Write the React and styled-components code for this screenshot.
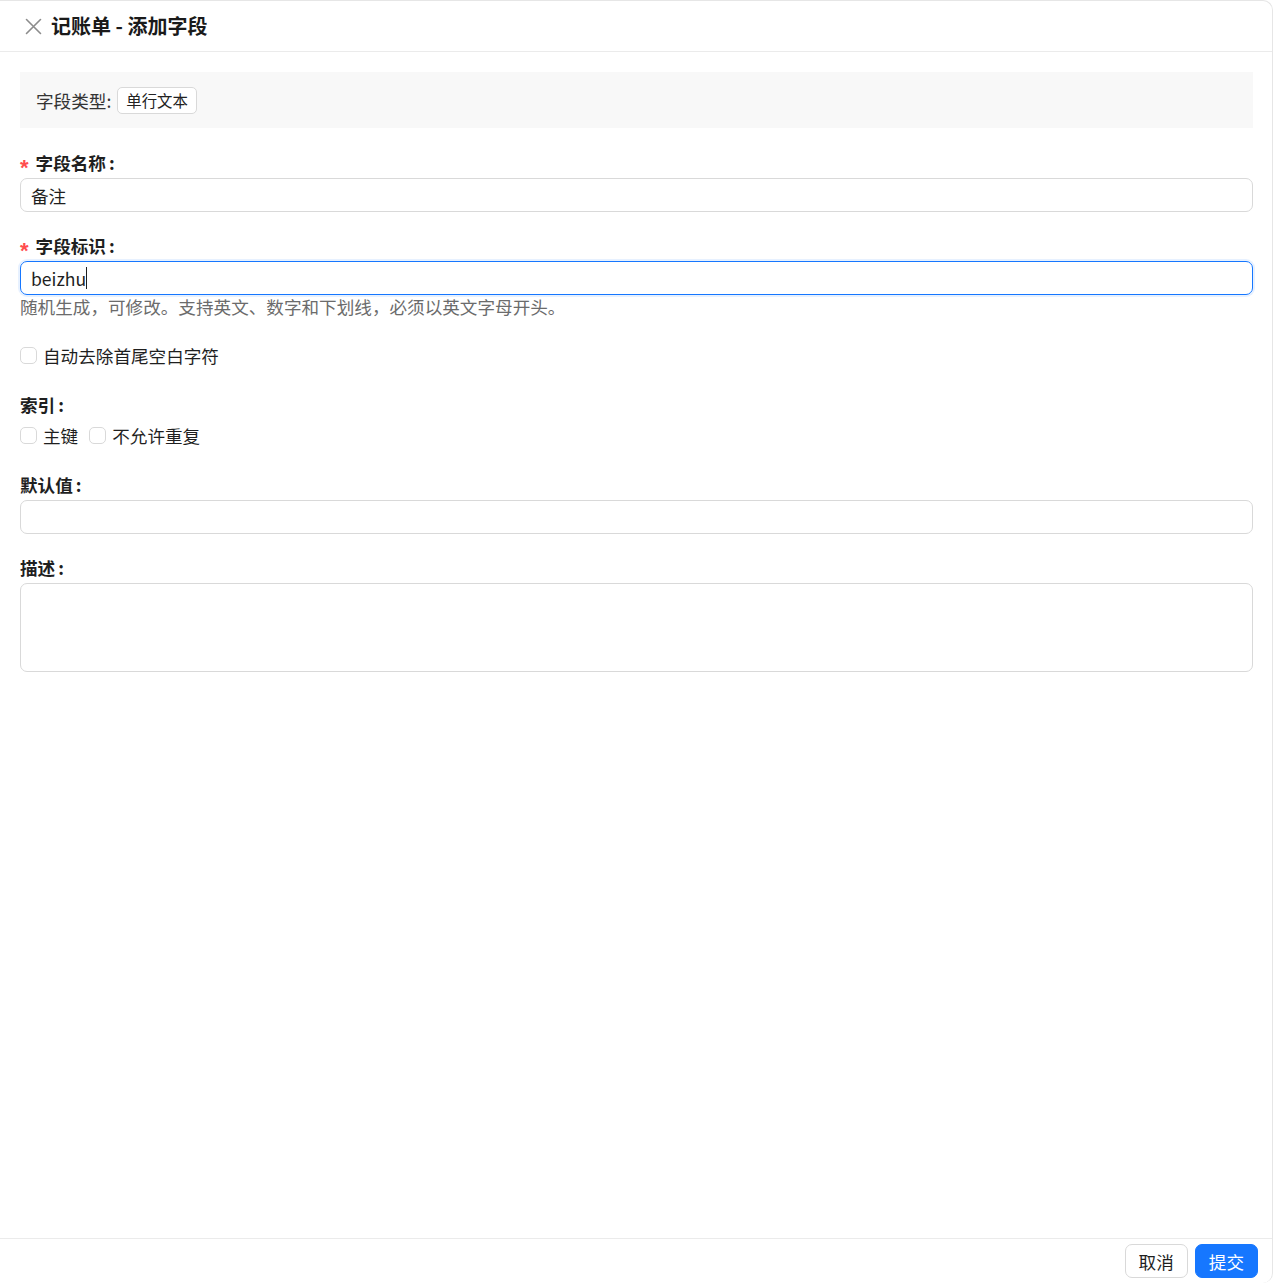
import styled, { createGlobalStyle } from 'styled-components'

const GlobalStyle = createGlobalStyle`
  html, body {
    margin: 0;
    padding: 0;
    background: #fff;
  }
  body {
    font-family: "Noto Sans CJK SC", "Noto Sans", sans-serif;
    font-size: 17.6px;
    color: #1f1f1f;
  }
  * { box-sizing: border-box; }
`

const Panel = styled.div`
  width: 1273px;
  height: 1283px;
  display: flex;
  flex-direction: column;
  border-top: 1px solid #e6e6e6;
  border-right: 1px solid #e6e6e6;
  border-top-right-radius: 10px;
  border-bottom-right-radius: 10px;
  background: #fff;
`

const Header = styled.div`
  height: 51px;
  display: flex;
  align-items: center;
  padding: 0 24px;
  gap: 9px;
  border-bottom: 1px solid #ebebeb;
`

const Close = styled.button`
  width: 18px;
  height: 18px;
  padding: 0;
  border: none;
  background: none;
  display: flex;
  align-items: center;
  justify-content: center;
  color: #8c8c8c;
  cursor: pointer;
`

const Title = styled.div`
  font-size: 20px;
  font-weight: 700;
  color: #1a1a1a;
  line-height: 1;
  margin-top: -1px;
`

const Body = styled.div`
  flex: 1;
  padding: 20px 19px 0 20px;
  overflow: auto;
`

const TypeBar = styled.div`
  height: 56px;
  background: #f8f8f8;
  display: flex;
  align-items: center;
  padding: 0 16px;
  gap: 6px;
  color: #333;
  margin-bottom: 23px;
`

const Tag = styled.span`
  display: inline-flex;
  align-items: center;
  height: 27px;
  padding: 0 8px;
  border: 1px solid #d9d9d9;
  border-radius: 5px;
  background: #fff;
  font-size: 15.4px;
  color: #222;
`

const Field = styled.div`
  margin-bottom: ${p => p.gap ?? 22}px;
`

const Label = styled.div`
  height: 24px;
  line-height: 24px;
  font-weight: 700;
  color: #1f1f1f;
  margin-bottom: 3px;
  display: flex;
  align-items: center;
`

const Colon = styled.span`
  margin-left: 3px;
`

const Star = styled.span`
  color: #ff4d4f;
  font-weight: 700;
  font-size: 22px;
  line-height: 1;
  margin-right: 7px;
  padding-top: 9px;
  font-family: "Liberation Sans", sans-serif;
`

const Input = styled.input`
  display: block;
  width: 100%;
  height: 34px;
  padding: 0 10px;
  border: 1px solid #d9d9d9;
  border-radius: 7px;
  font-family: inherit;
  font-size: 17.6px;
  color: #1f1f1f;
  outline: none;
  background: #fff;
`

const FocusBox = styled.div`
  height: 34px;
  padding: 0 10px;
  border: 1px solid #1677ff;
  border-radius: 7px;
  box-shadow: 0 0 0 2px rgba(22, 119, 255, 0.1);
  display: flex;
  align-items: center;
  color: #1f1f1f;
`

const Caret = styled.span`
  display: inline-block;
  width: 1px;
  height: 22px;
  background: #1f1f1f;
`

const TextArea = styled.textarea`
  display: block;
  width: 100%;
  height: 89px;
  padding: 6px 10px;
  border: 1px solid #d9d9d9;
  border-radius: 7px;
  font-family: inherit;
  font-size: 17.6px;
  resize: none;
  outline: none;
`

const Hint = styled.div`
  line-height: 24px;
  color: #6b6b6b;
`

const CheckRow = styled.div`
  display: flex;
  align-items: center;
  gap: 11px;
  height: ${p => p.h || 24}px;
`

const Check = styled.label`
  display: inline-flex;
  align-items: center;
  gap: 6px;
  color: #1f1f1f;
`

const Box = styled.span`
  width: 17px;
  height: 17px;
  border: 1px solid #d9d9d9;
  border-radius: 5px;
  background: #fff;
`

const Footer = styled.div`
  height: 45px;
  border-top: 1px solid #ebebeb;
  display: flex;
  justify-content: flex-end;
  align-items: flex-start;
  gap: 7px;
  padding: 5px 14px 0 0;
`

const Button = styled.button`
  height: 34px;
  padding: 0 13px;
  border-radius: 7px;
  font-family: inherit;
  font-size: 17.6px;
  cursor: pointer;
  border: 1px solid ${p => p.primary ? '#1677ff' : '#d9d9d9'};
  background: ${p => p.primary ? '#1677ff' : '#fff'};
  color: ${p => p.primary ? '#fff' : '#1f1f1f'};
`

const CloseIcon = () => (
  <svg width="17" height="17" viewBox="0 0 17 17" fill="none" stroke="currentColor" strokeWidth="1.6" strokeLinecap="round">
    <path d="M1.5 1.5 L15.5 15.5 M15.5 1.5 L1.5 15.5" />
  </svg>
)

export default function App() {
  return (
    <>
      <GlobalStyle />
      <Panel>
        <Header>
          <Close><CloseIcon /></Close>
          <Title>记账单 - 添加字段</Title>
        </Header>
        <Body>
          <TypeBar>
            字段类型:
            <Tag>单行文本</Tag>
          </TypeBar>

          <Field>
            <Label><Star>*</Star>字段名称<Colon>:</Colon></Label>
            <Input defaultValue="备注" />
          </Field>

          <Field gap={24}>
            <Label><Star>*</Star>字段标识<Colon>:</Colon></Label>
            <FocusBox>beizhu<Caret /></FocusBox>
            <Hint>随机生成，可修改。支持英文、数字和下划线，必须以英文字母开头。</Hint>
          </Field>

          <Field gap={26}>
            <CheckRow>
              <Check><Box />自动去除首尾空白字符</Check>
            </CheckRow>
          </Field>

          <Field gap={23}>
            <Label>索引<Colon>:</Colon></Label>
            <CheckRow h={30}>
              <Check><Box />主键</Check>
              <Check><Box />不允许重复</Check>
            </CheckRow>
          </Field>

          <Field>
            <Label>默认值<Colon>:</Colon></Label>
            <Input />
          </Field>

          <Field>
            <Label>描述<Colon>:</Colon></Label>
            <TextArea />
          </Field>
        </Body>
        <Footer>
          <Button>取消</Button>
          <Button primary>提交</Button>
        </Footer>
      </Panel>
    </>
  )
}
